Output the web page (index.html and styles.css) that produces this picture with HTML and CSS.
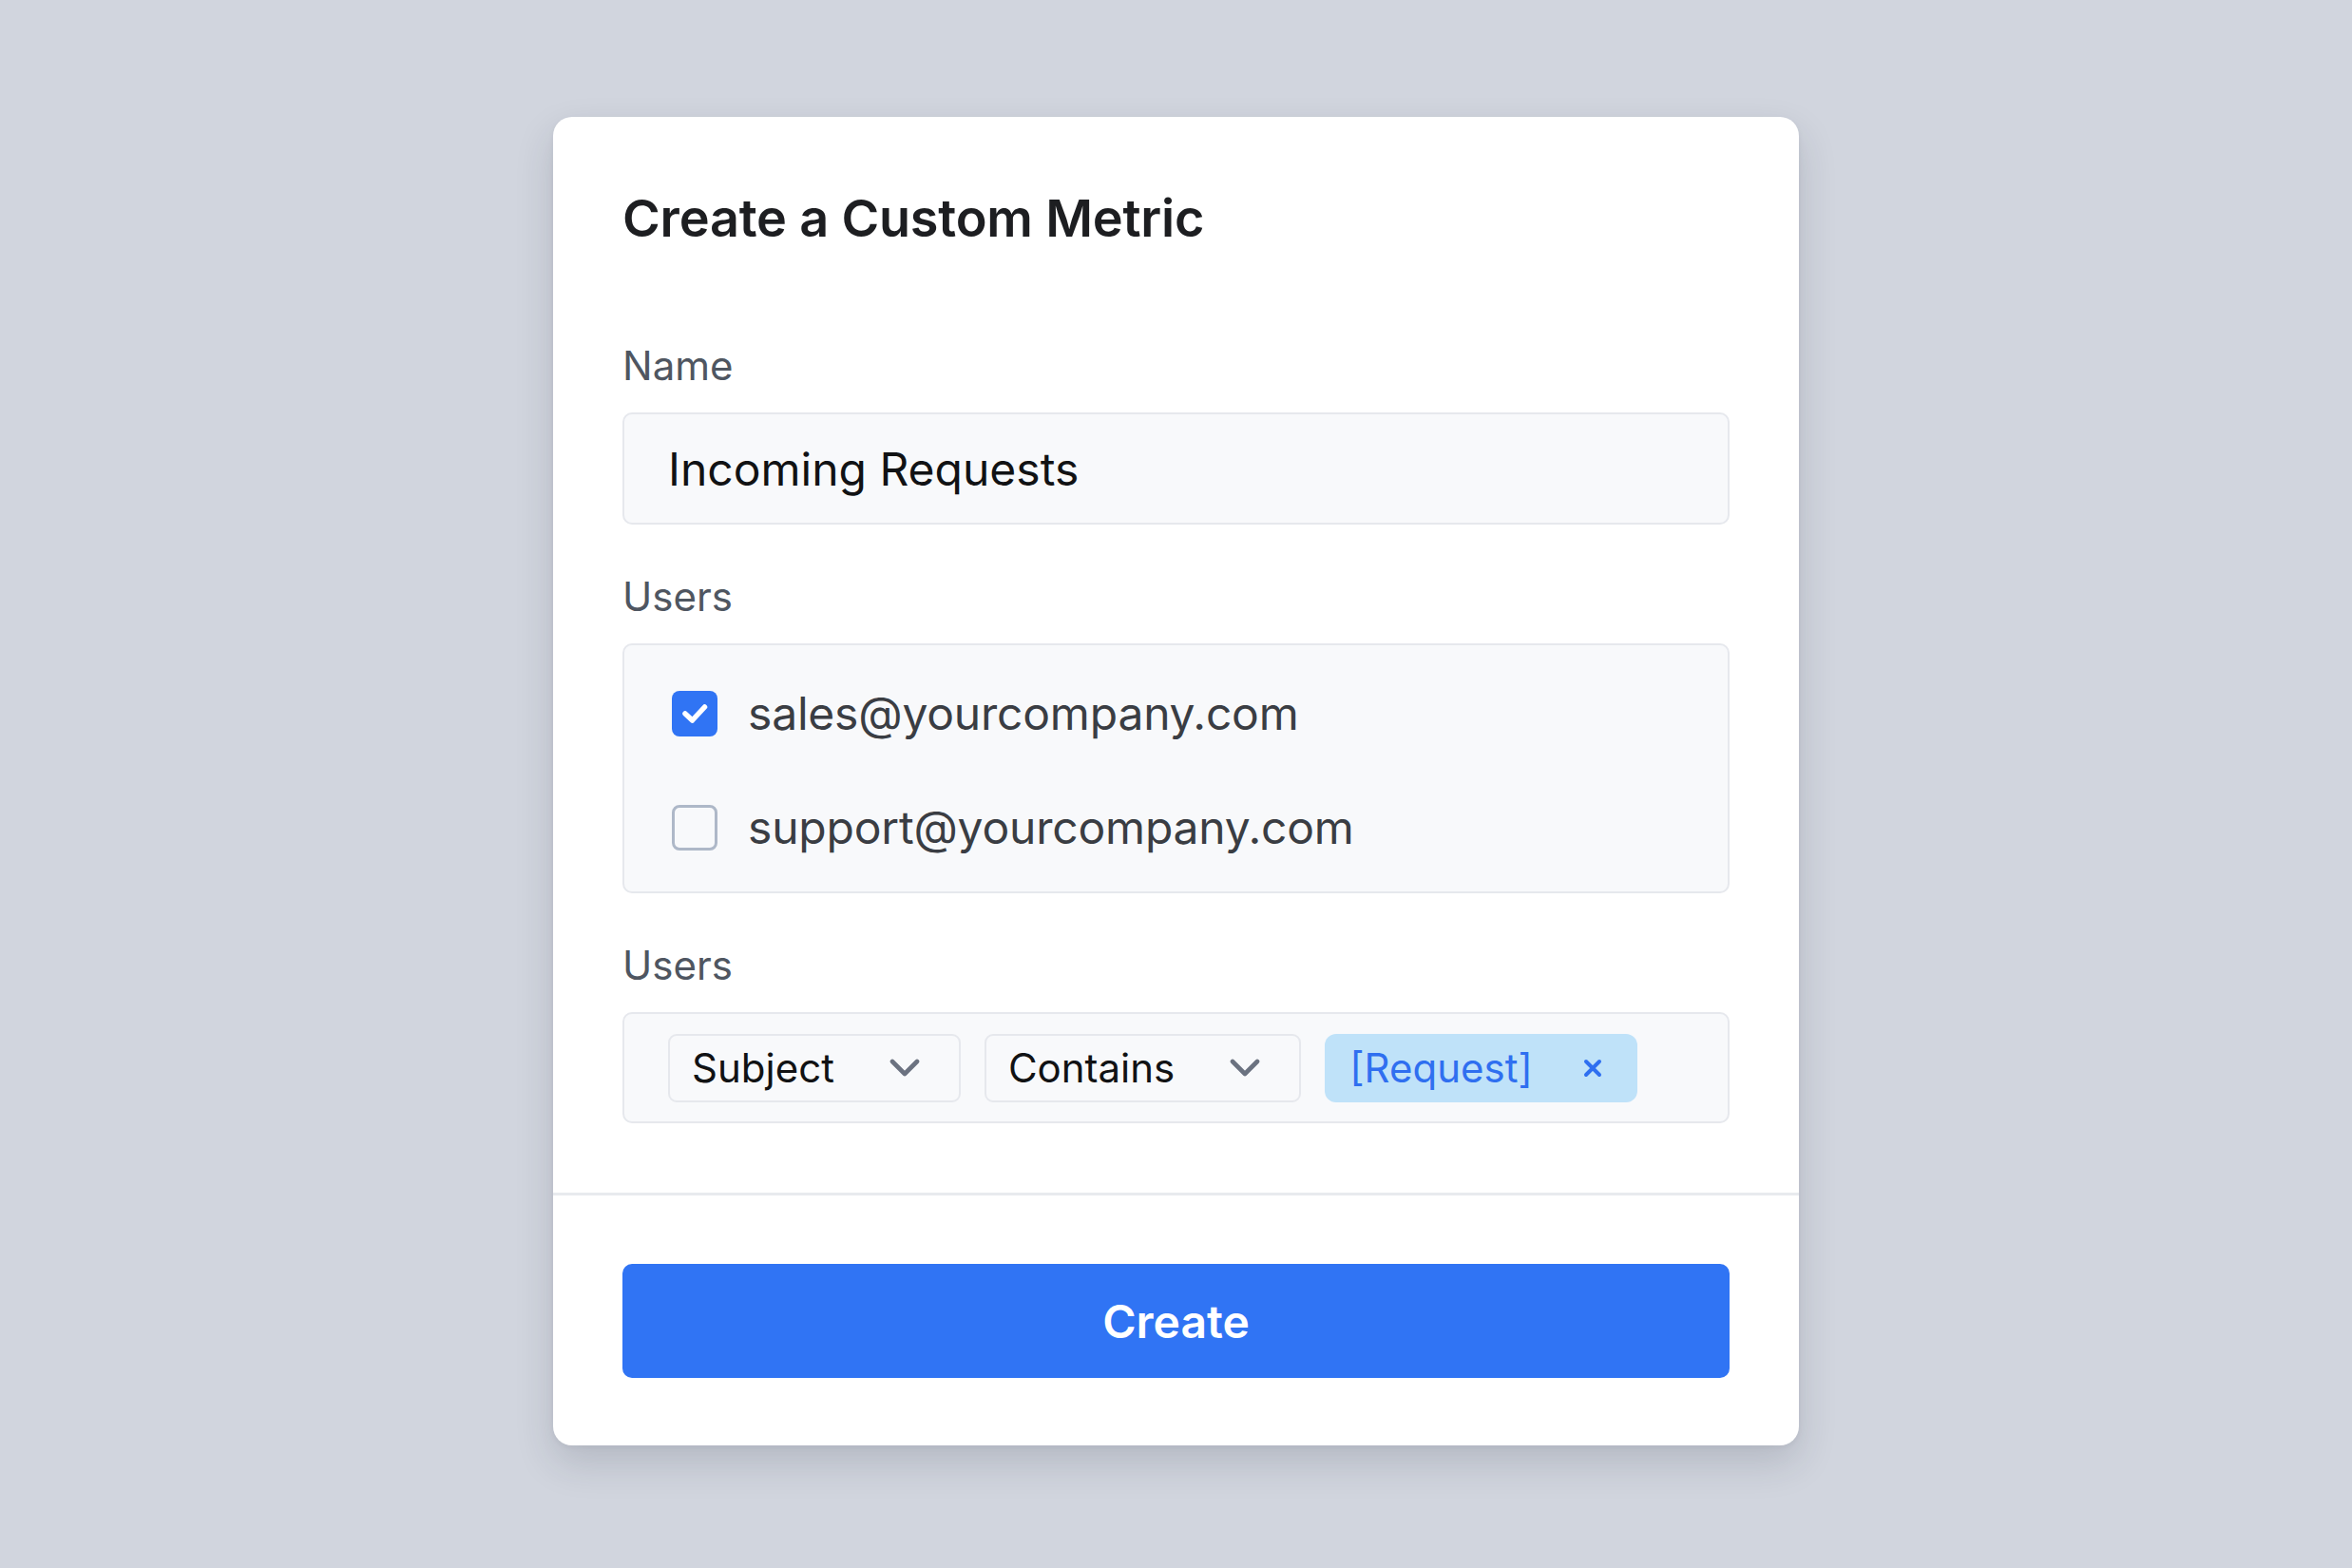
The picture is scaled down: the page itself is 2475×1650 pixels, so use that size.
FILE: index.html
```html
<!DOCTYPE html>
<html lang="en">
<head>
<meta charset="utf-8">
<title>Create a Custom Metric</title>
<link rel="stylesheet" href="styles.css">
</head>
<body>
<div class="page">
  <div class="card">
    <div class="card-body">
      <h1 class="title">Create a Custom Metric</h1>

      <div class="field field-first">
        <div class="label">Name</div>
        <div class="input">Incoming Requests</div>
      </div>

      <div class="field">
        <div class="label">Users</div>
        <div class="box users-box">
          <div class="check-row">
            <span class="checkbox checked">
              <svg viewBox="0 0 48 48" width="48" height="48"><polyline points="14,24 21.5,31 34.5,17" fill="none" stroke="#fff" stroke-width="5.5" stroke-linecap="round" stroke-linejoin="round"/></svg>
            </span>
            <span class="check-text">sales@yourcompany.com</span>
          </div>
          <div class="check-row">
            <span class="checkbox"></span>
            <span class="check-text">support@yourcompany.com</span>
          </div>
        </div>
      </div>

      <div class="field">
        <div class="label">Users</div>
        <div class="box filter-box">
          <div class="select">
            <span class="select-text">Subject</span>
            <svg class="chevron" viewBox="0 0 32 20" width="32" height="20"><polyline points="3,3 16,16 29,3" fill="none" stroke="#6b7280" stroke-width="4.6" stroke-linecap="round" stroke-linejoin="round"/></svg>
          </div>
          <div class="select">
            <span class="select-text">Contains</span>
            <svg class="chevron" viewBox="0 0 32 20" width="32" height="20"><polyline points="3,3 16,16 29,3" fill="none" stroke="#6b7280" stroke-width="4.6" stroke-linecap="round" stroke-linejoin="round"/></svg>
          </div>
          <div class="chip">
            <span class="chip-text">[Request]</span>
            <svg class="chip-x" viewBox="0 0 20 20" width="20" height="20"><path d="M3 3 L17 17 M17 3 L3 17" fill="none" stroke="#2f6ff0" stroke-width="4" stroke-linecap="round"/></svg>
          </div>
        </div>
      </div>
    </div>
    <div class="card-footer">
      <button class="btn-create" type="button">Create</button>
    </div>
  </div>
</div>
</body>
</html>
```

FILE: styles.css
```css
* {
  box-sizing: border-box;
}

html, body {
  margin: 0;
  padding: 0;
}

body {
  background: #d1d5de;
  font-family: "Inter", "Noto Sans", "Liberation Sans", sans-serif;
  width: 2475px;
  height: 1650px;
  overflow: hidden;
}

.page {
  display: flex;
  justify-content: center;
  align-items: flex-start;
  padding-top: 123px;
}

.card {
  width: 1311px;
  background: #ffffff;
  border-radius: 20px;
  box-shadow: 0 18px 40px rgba(30, 38, 56, 0.16), 0 2px 6px rgba(30, 38, 56, 0.05);
}

.card-body {
  padding: 72px 73px 73px 73px;
}

.title {
  margin: 0;
  font-size: 54px;
  line-height: 69px;
  font-weight: 600;
  color: #1d1e21;
  letter-spacing: -0.2px;
}

.field {
  display: flex;
  flex-direction: column;
  margin-top: 48px;
}

.field-first {
  margin-top: 93px;
}

.label {
  font-size: 42px;
  line-height: 56px;
  color: #4f5661;
  font-weight: 400;
  margin-bottom: 21px;
}

.input {
  height: 118px;
  border: 2.5px solid #e6e8ed;
  border-radius: 10px;
  background: #f8f9fb;
  padding: 0 46px;
  display: flex;
  align-items: center;
  font-size: 48px;
  color: #111214;
}

.box {
  border: 2.5px solid #e6e8ed;
  border-radius: 10px;
  background: #f8f9fb;
}

.users-box {
  height: 263px;
  padding: 36px 50px 30px 50px;
  display: flex;
  flex-direction: column;
  gap: 48px;
}

.check-row {
  display: flex;
  align-items: center;
  height: 72px;
  gap: 32px;
}

.checkbox {
  width: 48px;
  height: 48px;
  flex: none;
  border-radius: 8px;
  border: 3px solid #aeb8c8;
  background: #f8f9fb;
}

.checkbox.checked {
  border: none;
  background: #3074f4;
}

.checkbox svg {
  display: block;
}

.check-text {
  font-size: 48px;
  line-height: 72px;
  color: #3a3d43;
  letter-spacing: -0.2px;
}

.filter-box {
  height: 117px;
  padding: 0 46px;
  display: flex;
  align-items: center;
  gap: 25px;
}

.select {
  height: 72px;
  border: 2.5px solid #e6e8ed;
  border-radius: 9px;
  background: #f8f9fb;
  display: flex;
  align-items: center;
  padding: 0 41px 0 23px;
  gap: 58px;
}

.select-text,
.chip-text {
  font-size: 42px;
  line-height: 50px;
  color: #111214;
}

.chevron {
  display: block;
  width: 32px;
  height: 20px;
  flex: none;
}

.chip {
  height: 72px;
  border-radius: 12px;
  background: #bfe2f9;
  display: flex;
  align-items: center;
  padding: 0 37px 0 26px;
  gap: 53px;
}

.chip-text {
  color: #2f6ff0;
}

.chip-x {
  display: block;
  width: 20px;
  height: 20px;
  flex: none;
}

.card-footer {
  border-top: 3px solid #e8eaee;
  padding: 72px 73px 71px 73px;
}

.btn-create {
  display: flex;
  align-items: center;
  justify-content: center;
  width: 100%;
  height: 120px;
  border: none;
  border-radius: 10px;
  background: #3074f4;
  color: #ffffff;
  font-family: "Inter", "Noto Sans", "Liberation Sans", sans-serif;
  font-size: 48px;
  font-weight: 600;
  cursor: pointer;
}
```
